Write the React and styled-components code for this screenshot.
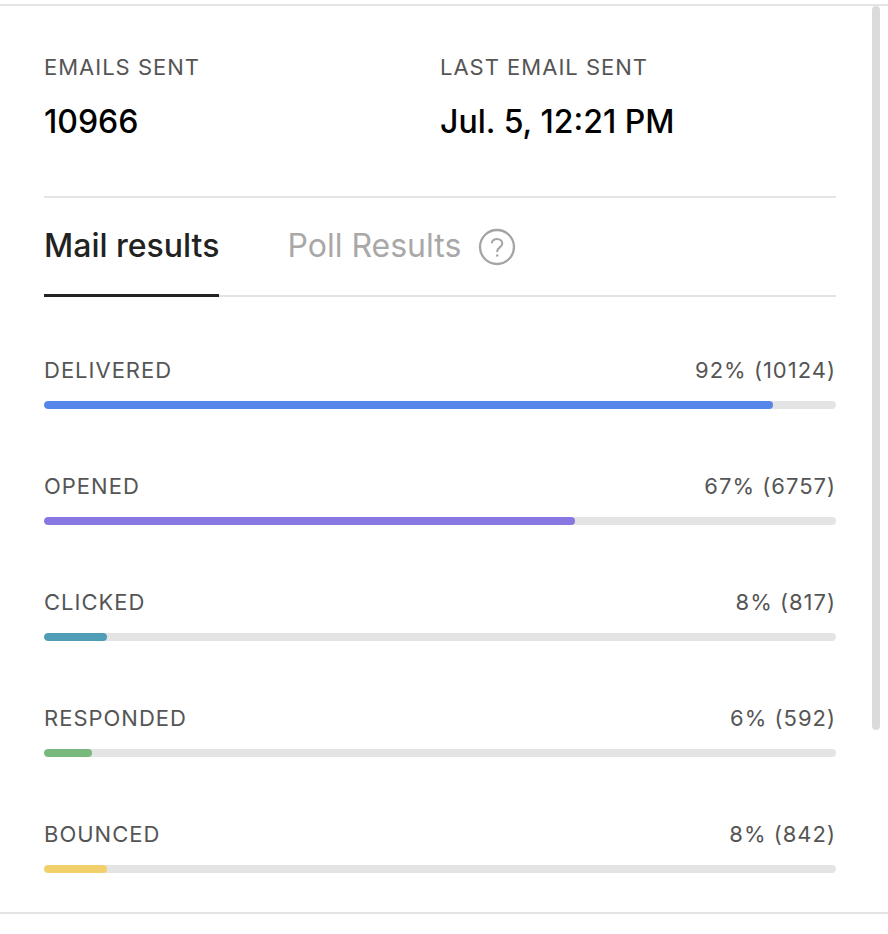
import React from "react";
import styled, { createGlobalStyle } from "styled-components";

const GlobalStyle = createGlobalStyle`
  *, *::before, *::after { box-sizing: border-box; }
  body { margin: 0; background: #fff; font-family: Inter, "Liberation Sans", sans-serif; color: #000; }
`;

const Panel = styled.main`
  display: flex;
  margin-top: 4px;
  border-top: 2px solid #e4e4e4;
  border-bottom: 2px solid #e4e4e4;
`;

const Content = styled.div`
  flex: 1;
  padding: 46px 36px 39px 44px;
`;

const ScrollTrack = styled.div`
  width: 16px;
  padding-right: 8px;
`;

const ScrollThumb = styled.div`
  width: 8px;
  height: calc(80% - 1px);
  border-radius: 4px;
  background: #dbdbda;
`;

const Summary = styled.dl`
  display: grid;
  grid-template-columns: 1fr 1fr;
  margin: 0;
  padding-bottom: 54px;
  border-bottom: 2px solid #e4e4e4;
`;

const StatLabel = styled.dt`
  font-size: 22px;
  line-height: 30px;
  letter-spacing: 1px;
  color: #555;
`;

const StatValue = styled.dd`
  margin: 20px 0 0;
  font-size: 32px;
  font-weight: 500;
  line-height: 40px;
`;

const Tabs = styled.div`
  display: flex;
  align-items: stretch;
  gap: 68px;
  height: 99px;
  border-bottom: 2px solid #e4e4e4;
`;

const Tab = styled.button`
  align-self: stretch;
  margin: 0 0 -2px;
  padding: 0;
  border: 0;
  border-bottom: 3px solid ${(p) => (p.$active ? "#222" : "transparent")};
  background: none;
  font: ${(p) => (p.$active ? 500 : 400)} 32px/40px Inter, "Liberation Sans", sans-serif;
  color: ${(p) => (p.$active ? "#222" : "#a8a8a8")};
`;

const TabGroup = styled.div`
  display: flex;
  align-items: center;
  gap: 17px;
`;

const HelpButton = styled.button`
  display: flex;
  padding: 0;
  border: 0;
  background: none;
  color: #a4a4a4;
`;

const Results = styled.section`
  display: grid;
  gap: 62px;
  padding-top: 58px;
`;

const ResultHeader = styled.div`
  display: flex;
  justify-content: space-between;
  font-size: 22px;
  line-height: 30px;
  letter-spacing: 1px;
  color: #555;
`;

const Bar = styled.div`
  height: 8px;
  margin-top: 16px;
  overflow: hidden;
  border-radius: 4px;
  background: #e4e4e4;
`;

const Fill = styled.div`
  height: 100%;
  border-radius: 4px;
  background: ${(p) => p.$color};
`;

const stats = [
  { label: "EMAILS SENT", value: "10966" },
  { label: "LAST EMAIL SENT", value: "Jul. 5, 12:21 PM" },
];

const results = [
  { label: "DELIVERED", percent: 92, count: 10124, color: "#5686ea" },
  { label: "OPENED", percent: 67, count: 6757, color: "#8777e0" },
  { label: "CLICKED", percent: 8, count: 817, color: "#4f9db6" },
  { label: "RESPONDED", percent: 6, count: 592, color: "#78b97d" },
  { label: "BOUNCED", percent: 8, count: 842, color: "#f1d06b" },
];

function HelpIcon() {
  return (
    <svg width="38" height="38" viewBox="0 0 38 38" fill="none" stroke="currentColor" strokeWidth="2" strokeLinecap="round" aria-hidden="true">
      <circle cx="19" cy="19" r="17" strokeWidth="2.3" />
      <path d="M13.9 14.6C14.5 12.4 16.5 11.1 19 11.1C22.1 11.1 24.3 13 24.3 15.6C24.3 19.3 19.2 19.4 19.2 23.3" />
      <circle cx="19.2" cy="27.5" r="1.2" fill="currentColor" stroke="none" />
    </svg>
  );
}

function Result({ label, percent, count, color }) {
  const id = `result-${label.toLowerCase()}`;
  return (
    <div>
      <ResultHeader>
        <span id={id}>{label}</span>
        <span>{`${percent}% (${count})`}</span>
      </ResultHeader>
      <Bar role="progressbar" aria-labelledby={id} aria-valuenow={percent} aria-valuemin={0} aria-valuemax={100}>
        <Fill $color={color} style={{ width: `${percent}%` }} />
      </Bar>
    </div>
  );
}

export default function App() {
  return (
    <>
      <GlobalStyle />
      <Panel>
        <Content>
          <Summary>
            {stats.map((stat) => (
              <div key={stat.label}>
                <StatLabel>{stat.label}</StatLabel>
                <StatValue>{stat.value}</StatValue>
              </div>
            ))}
          </Summary>
          <Tabs>
            <Tab type="button" aria-pressed="true" $active>Mail results</Tab>
            <TabGroup>
              <Tab type="button" aria-pressed="false">Poll Results</Tab>
              <HelpButton type="button" aria-label="About poll results"><HelpIcon /></HelpButton>
            </TabGroup>
          </Tabs>
          <Results>
            {results.map((result) => <Result key={result.label} {...result} />)}
          </Results>
        </Content>
        <ScrollTrack><ScrollThumb /></ScrollTrack>
      </Panel>
    </>
  );
}
